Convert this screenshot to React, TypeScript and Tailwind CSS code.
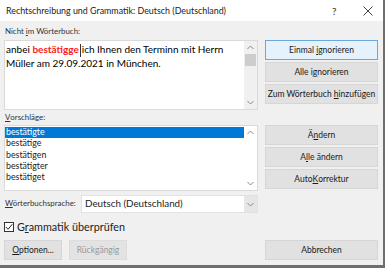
import React from "react";

const font = { fontFamily: 'Lato, "Liberation Sans", sans-serif' };

function Btn({ children, focused, disabled, className = "" }: { children: React.ReactNode; focused?: boolean; disabled?: boolean; className?: string }) {
  return (
    <div
      className={
        "h-[20px] flex items-center justify-center text-[8.5px] leading-none border whitespace-nowrap " +
        (focused
          ? "border-[#6aa7dc] bg-[#e5f1fb] text-[#1a1a1a] "
          : disabled
          ? "border-[#dcdcdc] bg-[#e3e3e3] text-[#9a9a9a] "
          : "border-[#d6d6d6] bg-[#e1e1e1] text-[#1a1a1a] ") +
        className
      }
    >
      {children}
    </div>
  );
}

function ChevUp() {
  return (
    <svg width="7" height="5" viewBox="0 0 7 5" fill="none" stroke="#8a8a8a" strokeWidth="1">
      <path d="M0.5 4 L3.5 1 L6.5 4" />
    </svg>
  );
}
function ChevDown() {
  return (
    <svg width="7" height="5" viewBox="0 0 7 5" fill="none" stroke="#8a8a8a" strokeWidth="1">
      <path d="M0.5 1 L3.5 4 L6.5 1" />
    </svg>
  );
}

export default function App() {
  return (
    <div style={font} className="w-[385px] h-[268px] flex flex-col border-r-[2px] border-b-[3px] border-[#6e6e6e] bg-[#f0f0f0] overflow-hidden text-[#1a1a1a]">
      {/* title bar */}
      <div className="h-[21px] bg-white flex items-center shrink-0">
        <div className="pl-[6px] pt-[1px] text-[8.9px] leading-none text-[#1a1a1a] flex-1 whitespace-nowrap">
          Rechtschreibung und Grammatik: Deutsch (Deutschland)
        </div>
        <div className="w-[10px] text-[10px] leading-none text-[#333] mr-[21px]">?</div>
        <svg width="10" height="10" viewBox="0 0 10 10" className="mr-[10px]" stroke="#444" strokeWidth="1">
          <path d="M0.5 0.5 L9.5 9.5 M9.5 0.5 L0.5 9.5" />
        </svg>
      </div>

      <div className="flex-1 flex flex-col pl-[4px] pr-[5px]">
        {/* Row A */}
        <div className="flex">
          <div className="w-[254px] flex flex-col">
            <div className="h-[19px] flex items-center pl-[1px] text-[7.9px] leading-none pt-[3px] text-[#333] whitespace-nowrap">
              Nicht&nbsp;<span className="underline">i</span>m Wörterbuch:
            </div>
            <div className="h-[70px] flex bg-white border border-[#dadada]">
              <div className="flex-1 pl-[1px] pt-[2px] text-[10px] leading-[13px] text-black">
                anbei <span className="text-[#ff1a1a] font-bold">bestätigge</span>
                <span className="inline-block w-[1px] h-[13px] bg-[#333] align-middle mx-[1px]"></span>
                ich Ihnen den Terminn mit Herrn Müller am 29.09.2021 in München.
              </div>
              <div className="w-[13px] bg-[#f0f0f0] flex flex-col items-center">
                <div className="h-[13px] flex items-center justify-center"><ChevUp /></div>
                <div className="w-[11px] h-[12px] bg-[#cdcdcd]"></div>
                <div className="flex-1"></div>
                <div className="h-[13px] flex items-center justify-center"><ChevDown /></div>
              </div>
            </div>
          </div>
          <div className="ml-[7px] w-[113px] pt-[19px] flex flex-col gap-[2px]">
            <Btn focused>Einmal&nbsp;<span className="underline">i</span>gnorieren</Btn>
            <Btn>Alle i<span className="underline">g</span>norieren</Btn>
            <Btn>Zum Wörterbuch&nbsp;<span className="underline">h</span>inzufügen</Btn>
          </div>
        </div>

        {/* Row B */}
        <div className="flex">
          <div className="w-[254px] flex flex-col">
            <div className="h-[15px] flex items-center pl-[1px] text-[7.9px] leading-none pt-[1px] text-[#333]">
              <span className="underline">V</span>orschläge:
            </div>
            <div className="h-[66px] flex bg-white border border-[#dadada]">
              <div className="flex-1 pt-[1px] text-[8.8px] leading-none text-[#222]">
                <div className="h-[11px] bg-[#0078d7] text-white flex items-center pl-[1px]">bestätigte</div>
                <div className="h-[11.3px] flex items-center pl-[1px]">bestätige</div>
                <div className="h-[11.3px] flex items-center pl-[1px]">bestätigen</div>
                <div className="h-[11.3px] flex items-center pl-[1px]">bestätigter</div>
                <div className="h-[11.3px] flex items-center pl-[1px]">bestätiget</div>
              </div>
              <div className="w-[13px] flex flex-col items-center">
                <div className="h-[13px] flex items-center justify-center"><ChevUp /></div>
                <div className="flex-1"></div>
                <div className="h-[13px] flex items-center justify-center"><ChevDown /></div>
              </div>
            </div>
          </div>
          <div className="ml-[7px] w-[113px] pt-[15px] flex flex-col gap-[2px]">
            <Btn>Ä<span className="underline">n</span>dern</Btn>
            <Btn>A<span className="underline">l</span>le ändern</Btn>
            <Btn>Auto<span className="underline">K</span>orrektur</Btn>
          </div>
        </div>

        {/* Row C */}
        <div className="mt-[4px] w-[254px] flex items-center">
          <div className="w-[77px] pl-[1px] text-[7.9px] leading-none text-[#333] whitespace-nowrap">
            <span className="underline">W</span>örterbuchsprache:
          </div>
          <div className="flex-1 h-[18px] flex border border-[#e2e2e2] bg-white">
            <div className="flex-1 flex items-center pl-[3px] text-[9.8px] leading-none text-[#222]">Deutsch (Deutschland)</div>
            <div className="w-[13px] bg-[#e6e6e6] flex items-center justify-center"><ChevDown /></div>
          </div>
        </div>

        {/* Row D */}
        <div className="mt-[9px] flex items-center h-[10px]">
          <div className="w-[10px] h-[10px] border border-[#333] bg-white flex items-center justify-center">
            <svg width="8" height="8" viewBox="0 0 8 8" fill="none" stroke="#222" strokeWidth="1">
              <path d="M0.8 4 L3 6.3 L7.3 1.2" />
            </svg>
          </div>
          <div className="ml-[3px] text-[10.8px] leading-none text-[#222]">
            G<span className="underline">r</span>ammatik überprüfen
          </div>
        </div>

        {/* Row E */}
        <div className="mt-[8px] flex">
          <Btn className="w-[58px]"><span className="underline">O</span>ptionen...</Btn>
          <Btn disabled className="w-[58px] ml-[7px]">Rückgängig</Btn>
          <div className="flex-1"></div>
          <Btn className="w-[113px]">Abbrechen</Btn>
        </div>
      </div>
    </div>
  );
}
